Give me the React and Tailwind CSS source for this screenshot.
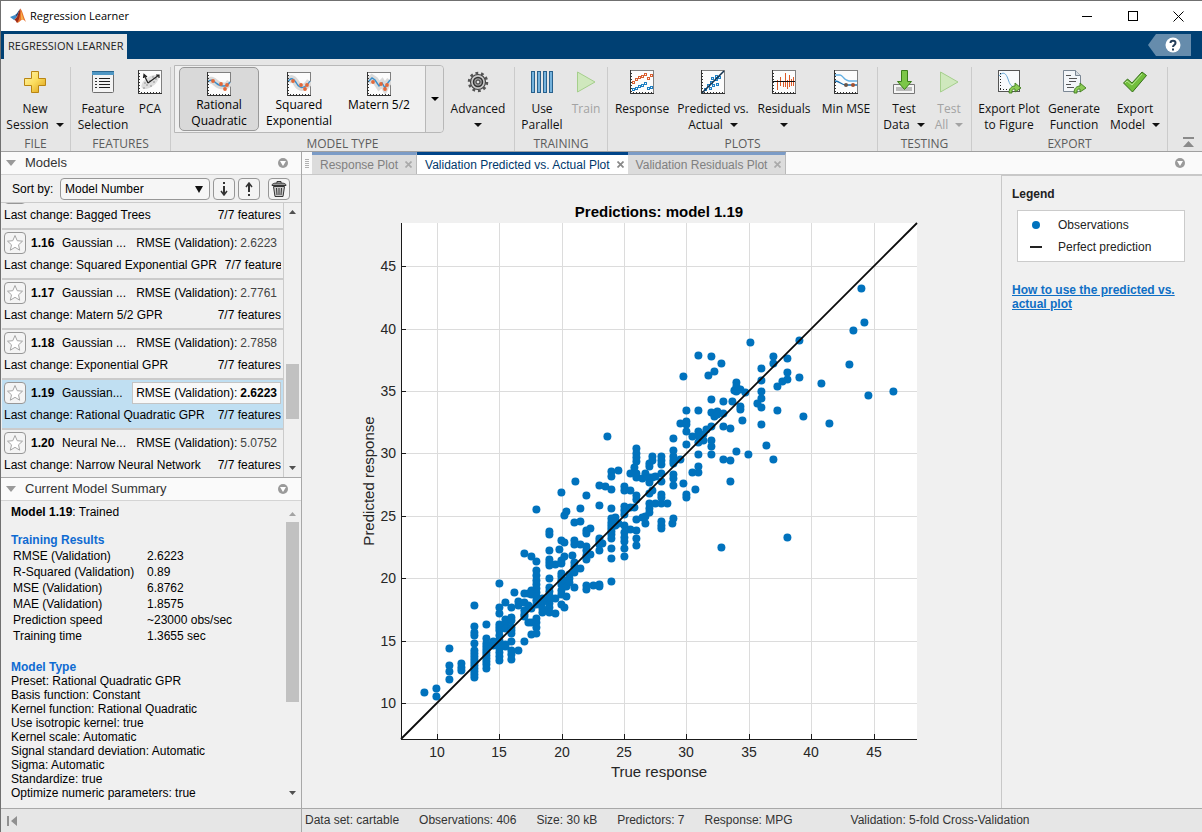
import React from "react";

// the first row is scrolled mostly out of view, only its second line is filled
const models = [
    { id: "1.15", change: "Bagged Trees", features: "7/7 features" },
    { id: "1.16", name: "Gaussian ...", rmse: "2.6223", change: "Squared Exponential GPR", features: "7/7 features" },
    { id: "1.17", name: "Gaussian ...", rmse: "2.7761", change: "Matern 5/2 GPR", features: "7/7 features" },
    { id: "1.18", name: "Gaussian ...", rmse: "2.7858", change: "Exponential GPR", features: "7/7 features" },
    { id: "1.19", name: "Gaussian...", rmse: "2.6223", change: "Rational Quadratic GPR", features: "7/7 features", selected: true },
    { id: "1.20", name: "Neural Ne...", rmse: "5.0752", change: "Narrow Neural Network", features: "7/7 features" },
];

const results = [
    ["RMSE (Validation)", "2.6223"],
    ["R-Squared (Validation)", "0.89"],
    ["MSE (Validation)", "6.8762"],
    ["MAE (Validation)", "1.8575"],
    ["Prediction speed", "~23000 obs/sec"],
    ["Training time", "1.3655 sec"],
];

const modelType = [
    "Preset: Rational Quadratic GPR",
    "Basis function: Constant",
    "Kernel function: Rational Quadratic",
    "Use isotropic kernel: true",
    "Kernel scale: Automatic",
    "Signal standard deviation: Automatic",
    "Sigma: Automatic",
    "Standardize: true",
    "Optimize numeric parameters: true",
];

// each row is one x followed by all the y values in that column
const columns = [
    [424, 692],
    [436, 688, 696],
    [449, 648, 665, 671, 679],
    [461, 663, 667, 670],
    [474, 605, 626, 632, 635, 643, 650, 653, 656, 659, 662, 665, 668, 671, 674, 677],
    [486, 624, 638, 643, 646, 649, 652, 655, 658, 661, 664, 668],
    [493, 641, 645],
    [499, 583, 607, 613, 624, 627, 630, 635, 640, 644, 648, 652, 656, 660],
    [505, 602, 619, 624, 628, 644, 646],
    [511, 607, 617, 620, 627, 630, 633, 641, 650, 654, 659],
    [514, 592],
    [518, 601, 605, 650],
    [524, 553, 593, 602, 610, 614, 616, 641],
    [528, 593, 605, 622],
    [531, 556, 590, 594, 608, 622, 634],
    [536, 509, 561, 570, 575, 580, 584, 588, 592, 596, 600, 604, 618, 622, 627, 633],
    [542, 598, 602, 608, 612],
    [549, 531, 534, 550, 559, 562, 565, 578, 587, 591, 595, 599, 603, 607, 612],
    [555, 564, 598, 613],
    [559, 549],
    [561, 492, 540, 560, 563, 573, 576, 580, 584, 590, 594, 604],
    [564, 515, 542, 556, 580, 607],
    [566, 511, 586, 596],
    [569, 574, 578, 582],
    [572, 555],
    [574, 522, 540, 544, 562, 566, 572, 587],
    [575, 481],
    [580, 508, 521, 544, 568],
    [586, 495, 530, 533, 546, 550, 555, 559, 585, 589],
    [590, 528, 554],
    [593, 585],
    [599, 505, 485, 538, 541, 544, 550, 584, 586],
    [602, 543],
    [605, 486],
    [607, 436],
    [611, 471, 476, 489, 508, 518, 522, 525, 528, 531, 534, 538, 548, 558, 581],
    [615, 517, 521, 525],
    [618, 470, 523],
    [624, 486, 490, 506, 510, 514, 525, 532, 537, 541, 548, 556],
    [630, 473, 490, 507, 529],
    [634, 467, 507],
    [636, 448, 453, 457, 461, 473, 477, 495, 499, 519, 530, 538, 545],
    [642, 478, 517],
    [645, 473, 516, 523],
    [649, 463, 466, 477, 482, 493, 503, 508, 512],
    [652, 456, 460, 477, 490],
    [655, 476, 503],
    [661, 456, 460, 464, 473, 481, 494, 497, 503, 521, 525, 528],
    [667, 503],
    [672, 523],
    [673, 438, 450, 456, 460, 463, 474, 478, 485, 518],
    [680, 423, 459],
    [683, 376, 483],
    [686, 410, 421, 424, 431, 444, 494, 497],
    [692, 436, 472],
    [695, 489],
    [698, 355, 410, 431, 435, 442, 454, 466, 472],
    [703, 434, 440],
    [706, 429],
    [708, 375],
    [711, 356, 399, 412, 426, 440, 446, 454],
    [714, 371, 416],
    [717, 411, 414],
    [721, 363, 547],
    [723, 401, 413, 426, 459],
    [730, 428, 460, 481],
    [732, 401],
    [734, 390],
    [736, 382, 386, 391, 451],
    [740, 389, 406, 409],
    [742, 420],
    [745, 392],
    [748, 454],
    [750, 342],
    [757, 403],
    [761, 368, 380, 391, 398, 407, 424],
    [766, 445],
    [773, 356, 363, 459],
    [777, 386, 410],
    [782, 381],
    [787, 358, 372, 379, 537],
    [799, 340, 377],
    [803, 416],
    [821, 383],
    [829, 423],
    [849, 364],
    [853, 330],
    [861, 288],
    [864, 322],
    [868, 395],
    [893, 391],
];

const ticks = [
    { label: 10, x: 437, y: 703 },
    { label: 15, x: 499, y: 641 },
    { label: 20, x: 562, y: 578 },
    { label: 25, x: 624, y: 516 },
    { label: 30, x: 686, y: 453 },
    { label: 35, x: 749, y: 391 },
    { label: 40, x: 811, y: 329 },
    { label: 45, x: 874, y: 266 },
];

function ScatterPlot() {
    return (
        <svg viewBox="302 175 699 633" className="h-full w-full" fontFamily="'Liberation Sans', Arial, sans-serif">
            <text x="659" y="217" textAnchor="middle" fontSize="15" fontWeight="bold" fill="#000">Predictions: model 1.19</text>
            <rect x="401" y="223" width="516" height="516" fill="#fff" />
            {ticks.map((t) => (
                <g key={t.label} stroke="#dcdcdc" shapeRendering="crispEdges">
                    <line x1={t.x} x2={t.x} y1="223" y2="739" />
                    <line x1="401" x2="917" y1={t.y} y2={t.y} />
                </g>
            ))}
            {columns.map(([x, ...ys]) =>
                ys.map((y) => <circle key={`${x}-${y}`} cx={x + 0.4} cy={y + 0.4} r="4" fill="#0072bd" />)
            )}
            <line x1="401" y1="739" x2="917" y2="223" stroke="#0a0a0a" strokeWidth="1.800" />
            <path d="M401 223V739H917" fill="none" stroke="#1a1a1a" shapeRendering="crispEdges" />
            {ticks.map((t) => (
                <g key={t.label} fill="#262626" fontSize="14">
                    <path d={`M${t.x} 739v-5M401 ${t.y}h5`} stroke="#1a1a1a" shapeRendering="crispEdges" />
                    <text x={t.x} y="757" textAnchor="middle">{t.label}</text>
                    <text x="396" y={t.y + 5} textAnchor="end">{t.label}</text>
                </g>
            ))}
            <text x="659" y="777" textAnchor="middle" fontSize="15" fill="#262626">True response</text>
            <text transform="translate(374 481) rotate(-90)" textAnchor="middle" fontSize="15" fill="#262626">Predicted response</text>
        </svg>
    );
}

/* ---------- icons ---------- */

function Svg({ size = 24, children }) {
    return (
        <svg width={size} height={size} viewBox="0 0 24 24" fill="none" className="shrink-0" aria-hidden="true">
            {children}
        </svg>
    );
}

function Logo() {
    return (
        <svg width="18" height="16" viewBox="0 0 18 16" className="shrink-0" aria-hidden="true">
            <path d="M1 9l5-2 2 2-3 3z" fill="#3c8ccb" />
            <path d="M6 7c2-1 3-4 5-6L8 9z" fill="#1f4f86" />
            <path d="M5 12l3-3c1-2 2-7 3.500-8.500C12 3 12 8 11 11c-1 2-2 3-3 4-1-1-1-3-3-3z" fill="#9c2a17" />
            <path d="M11.500.5C13.500 3 15 10 17 14c-2-2-3-3-4.500-2S10 14.500 8 15c2-3 3.500-8 3.500-14.500z" fill="#e8702a" />
            <path d="M12 3c1 3 2 7 3 9-1-1-2-1-3 0z" fill="#f6b04c" />
        </svg>
    );
}

const PlusIcon = () => (
    <Svg>
        <defs>
            <linearGradient id="gold" x1="0" y1="0" x2="1" y2="1">
                <stop offset="0" stopColor="#fff6b0" />
                <stop offset="0.5" stopColor="#fbdc5c" />
                <stop offset="1" stopColor="#d89a14" />
            </linearGradient>
        </defs>
        <path d="M8.500 1.500h7v7h7v7h-7v7h-7v-7h-7v-7h7z" fill="url(#gold)" stroke="#b98512" />
    </Svg>
);

const ListIcon = () => (
    <Svg>
        <rect x="1.500" y="1.500" width="21" height="21" rx="1" fill="#f4f4f4" stroke="#6e6e6e" />
        <path d="M1 1h22v4H1z" fill="#4f97c4" />
        <path d="M1 1h22v1H1z" fill="#2c6890" />
        <path d="M8 8.500h11M8 11.500h11M8 14.500h11M8 17.500h11" stroke="#222" />
        <path d="M4 8.500h2M4 11.500h2M4 14.500h2M4 17.500h2" stroke="#333" />
    </Svg>
);

function PlotFrame({ children }) {
    return (
        <Svg>
            <rect x="0.500" y="0.500" width="23" height="23" fill="#fcfcfc" stroke="#808080" />
            {children}
            <path d="M1.500 3v19M3 22.500h20" stroke="#333" strokeDasharray="1 2" />
            <path d="M.5 0v23.500H24" stroke="#333" />
        </Svg>
    );
}

const PcaIcon = () => (
    <PlotFrame>
        <ellipse cx="12" cy="12" rx="10" ry="5" transform="rotate(-35 12 12)" fill="#dedede" />
        <path d="M5 17h2v2H5zM8 14h2v2H8zM12 15h2v2h-2zM15 11h2v2h-2zM17 8h2v2h-2zM11 10h2v2h-2zM6 12h2v2H6zM14 6h2v2h-2z" fill="#b8b8b8" />
        <path d="M10 13L21 5M18 5h3v3M10 13L6 5M5.500 8L6 4.500 9 7" stroke="#222" strokeWidth="1.200" />
    </PlotFrame>
);

const fits = {
    rq: {
        line: "M1 10c2-3 5-2 8 1s5 3 8 3 4-1 6-4",
        dots: [[6, 9], [14, 12], [20, 13], [18, 17]],
    },
    se: {
        line: "M1 10c3-6 6-3 9 2s8 5 13-3",
        dots: [[6, 9], [14, 13], [20, 13], [18, 17]],
    },
    matern: {
        line: "M1 10l4-4 3 2 4 6 3-3 3 5 2-4 3-4",
        dots: [[6, 10], [14, 12], [20, 13], [18, 17]],
    },
};

const FitIcon = ({ kind }) => (
    <PlotFrame>
        <path d={fits[kind].line} stroke="#dadada" strokeWidth="7" />
        <path d={fits[kind].line} stroke="#3a8fcb" strokeWidth="1.400" />
        {fits[kind].dots.map(([x, y]) => <circle key={`${x}-${y}`} cx={x} cy={y} r="1.900" fill="#e2693a" />)}
    </PlotFrame>
);

const GearIcon = () => (
    <Svg>
        <circle cx="12" cy="12" r="9" stroke="#555" strokeWidth="2.500" strokeDasharray="2.800 2.855" />
        <circle cx="12" cy="12" r="7.500" fill="#c9c9c9" stroke="#444" strokeWidth="1.200" />
        <circle cx="12" cy="12" r="4.500" fill="#999" stroke="#333" strokeWidth="1.500" />
        <circle cx="12" cy="12" r="2" fill="#e6e6e6" stroke="#333" />
    </Svg>
);

const ParallelIcon = () => (
    <Svg>
        {[1, 7, 13, 19].map((x) => (
            <rect key={x} x={x + 0.5} y="1.500" width="3" height="21" fill="#75b2dc" stroke="#28618d" />
        ))}
    </Svg>
);

const PlayIcon = () => (
    <Svg>
        <path d="M3.500 2L21 12 3.500 22z" fill="#cfe8bd" stroke="#a5cf8c" strokeLinejoin="round" />
    </Svg>
);

const ResponseIcon = () => (
    <PlotFrame>
        {[[3, 12], [6, 9], [9, 7], [12, 6], [15, 4], [18, 8], [21, 5]].map(([x, y]) => (
            <rect key={x} x={x - 0.5} y={y - 0.5} width="2" height="2" stroke="#d95f30" />
        ))}
        {[[3, 19], [6, 18], [9, 16], [12, 15], [15, 13], [18, 18], [21, 17]].map(([x, y]) => (
            <rect key={x} x={x - 0.5} y={y - 0.5} width="2" height="2" stroke="#1d7fc4" />
        ))}
    </PlotFrame>
);

const PredictedIcon = () => (
    <PlotFrame>
        {[[4, 19], [7, 15], [9, 18], [10, 12], [12, 15], [11, 8], [15, 9], [16, 14], [15, 6], [18, 7]].map(([x, y]) => (
            <rect key={`${x}-${y}`} x={x - 0.5} y={y - 0.5} width="2" height="2" fill="#d8ecfa" stroke="#1d7fc4" />
        ))}
        <path d="M1 23L23 1" stroke="#153450" strokeWidth="1.600" />
    </PlotFrame>
);

const ResidualsIcon = () => (
    <PlotFrame>
        <path d="M5.500 10v10M8.500 7v9M11.500 11v6M13.500 3v14M15.500 10v9M17.500 5v12M19.500 9v7M21.500 7v9" stroke="#dd5a27" />
        <path d="M1 11.500h22" stroke="#111" />
    </PlotFrame>
);

const MinMseIcon = () => (
    <PlotFrame>
        <path d="M1 5h5c3 0 4 6 9 6h8" stroke="#63b0e3" strokeWidth="1.400" />
        <path d="M1 11c5 0 6 4 11 4h11" stroke="#1b6fae" strokeWidth="1.400" />
        <circle cx="12" cy="15" r="2" fill="#6b5548" />
        <circle cx="19" cy="15" r="2" fill="#a4502f" />
    </PlotFrame>
);

const TestDataIcon = () => (
    <Svg>
        <path d="M1.500 14.500h21v9h-21z" fill="#f5f5f5" stroke="#777" />
        <path d="M4 17h16v4H4z" fill="#bbb" />
        <path d="M9.500.5h6v11h4l-7 8-7-8h4z" fill="#7cc648" stroke="#3b7d1a" />
    </Svg>
);

const GreenArrow = () => (
    <path d="M12 23c0-5 3-7 6-7v-3l6 5-6 4v-3c-3 0-3 1-3 4z" fill="#8ccb55" stroke="#3f7d1d" strokeWidth="0.900" />
);

const ExportPlotIcon = () => (
    <Svg>
        <rect x="1.500" y="0.500" width="21" height="21" fill="#f8fafc" stroke="#555" />
        <path d="M3.500 3v17M3 19.500h10" stroke="#222" strokeDasharray="1 2" />
        <path d="M2 6c4-5 7-3 9 3s3 7 6 8" stroke="#6ba9d6" />
        <GreenArrow />
    </Svg>
);

const GenerateIcon = () => (
    <Svg>
        <path d="M1.500.5h12l5 5v16h-17z" fill="#f3f6f9" stroke="#7b8794" />
        <path d="M13.500.5v5h5" fill="#d5dbe0" stroke="#7b8794" />
        <path d="M4 5.500h5M7 8.500h8M7 11.500h7M4 14.500h5M5 17.500h7" stroke="#555" />
        <GreenArrow />
    </Svg>
);

const CheckIcon = () => (
    <Svg>
        <path d="M.5 13l4-4 4.500 4L19 2l4.500 3.500L9.500 22z" fill="#72bf3c" stroke="#356f19" strokeLinejoin="round" />
        <path d="M2 13l2-2 5 4L19 4" stroke="#b7e394" />
    </Svg>
);

function Caret({ className = "" }) {
    return (
        <svg width="8" height="4" viewBox="0 0 8 4" className={`inline-block ${className}`} aria-hidden="true">
            <path d="M0 0h8L4 4z" fill="currentColor" />
        </svg>
    );
}

function PanelMenuIcon() {
    return (
        <svg width="10" height="10" viewBox="0 0 10 10" aria-hidden="true">
            <circle cx="5" cy="5" r="5" fill="#9a9a9a" />
            <path d="M2 3h6L5 8z" fill="#fff" />
        </svg>
    );
}

/* ---------- toolstrip ---------- */

function ToolButton({ icon, lines, caret, disabled, className }) {
    return (
        <button type="button" disabled={disabled} className={`flex flex-col items-center whitespace-nowrap ${disabled ? "text-[#a3a3a3]" : "text-[#111]"} ${className}`}>
            {icon}
            <span className="mt-[7px] block">{lines[0]}</span>
            <span className="flex h-4 items-center gap-[7px]">
                {lines[1]}
                {caret && <Caret />}
            </span>
        </button>
    );
}

function Section({ title, className = "", children }) {
    return (
        <section className={`flex flex-col border-r border-[#cbcbcb] ${className}`}>
            <div className="flex flex-1 justify-end pt-[3px] pr-px">{children}</div>
            <h2 className="h-[14px] text-center leading-[14px] text-[#5c5c5c]">{title}</h2>
        </section>
    );
}

function GalleryItem({ icon, lines, active }) {
    return (
        <button type="button" aria-pressed={!!active} className={`flex h-16 w-20 flex-col items-center rounded-[5px] border pt-1 ${active ? "border-[#999] bg-[#d9d9d9]" : "border-transparent"}`}>
            {icon}
            <span className="mt-px block">
                {lines.map((l) => <span key={l} className="block leading-4">{l}</span>)}
            </span>
        </button>
    );
}

function Toolstrip() {
    return (
        <div className="flex h-[93px] shrink-0 border-b border-[#a0a0a0] bg-[#e6e6e6] pt-2 font-['Open_Sans',sans-serif] text-[12px] leading-4">
            <Section title="FILE" className="w-[70px]">
                <ToolButton icon={<PlusIcon />} lines={["New", "Session"]} caret className="w-[68px]" />
            </Section>
            <Section title="FEATURES" className="w-[100px]">
                <ToolButton icon={<ListIcon />} lines={["Feature", "Selection"]} className="w-[56px]" />
                <ToolButton icon={<PcaIcon />} lines={["PCA"]} className="w-[38px]" />
            </Section>
            <section className="flex w-[344px] flex-col border-r border-[#cbcbcb]">
                <div className="flex flex-1 pl-[3px]">
                    <div className="-mt-[2px] flex h-[68px] rounded-r-[4px] border border-[#b8b8b8] bg-[#f0f0f0]">
                        <div className="flex w-[250px] p-[1px] pl-1">
                            <GalleryItem icon={<FitIcon kind="rq" />} lines={["Rational", "Quadratic"]} active />
                            <GalleryItem icon={<FitIcon kind="se" />} lines={["Squared", "Exponential"]} />
                            <GalleryItem icon={<FitIcon kind="matern" />} lines={["Matern 5/2"]} />
                        </div>
                        <button type="button" aria-label="More models" className="flex w-[18px] items-center justify-center rounded-r-[4px] border-l border-[#b8b8b8] bg-[#e6e6e6]">
                            <Caret />
                        </button>
                    </div>
                    <div className="pt-[3px]">
                        <ToolButton icon={<GearIcon />} lines={["Advanced"]} caret className="w-[68px]" />
                    </div>
                </div>
                <h2 className="h-[14px] text-center leading-[14px] text-[#5c5c5c]">MODEL TYPE</h2>
            </section>
            <Section title="TRAINING" className="w-[93px]">
                <ToolButton icon={<ParallelIcon />} lines={["Use", "Parallel"]} className="w-[48px]" />
                <ToolButton icon={<PlayIcon />} lines={["Train"]} disabled className="w-[40px]" />
            </Section>
            <Section title="PLOTS" className="w-[270px]">
                <ToolButton icon={<ResponseIcon />} lines={["Response"]} className="w-[64px]" />
                <ToolButton icon={<PredictedIcon />} lines={["Predicted vs.", "Actual"]} caret className="w-[78px]" />
                <ToolButton icon={<ResidualsIcon />} lines={["Residuals"]} caret className="w-[64px]" />
                <ToolButton icon={<MinMseIcon />} lines={["Min MSE"]} className="w-[60px]" />
            </Section>
            <Section title="TESTING" className="w-[94px]">
                <ToolButton icon={<TestDataIcon />} lines={["Test", "Data"]} caret className="w-[48px]" />
                <ToolButton icon={<PlayIcon />} lines={["Test", "All"]} caret disabled className="w-[42px]" />
            </Section>
            <Section title="EXPORT" className="w-[196px]">
                <ToolButton icon={<ExportPlotIcon />} lines={["Export Plot", "to Figure"]} className="w-[70px]" />
                <ToolButton icon={<GenerateIcon />} lines={["Generate", "Function"]} className="w-[60px]" />
                <ToolButton icon={<CheckIcon />} lines={["Export", "Model"]} caret className="w-[62px]" />
            </Section>
            <div className="flex flex-1 items-end justify-end pr-2 pb-[3px]">
                <button type="button" aria-label="Collapse toolstrip">
                    <svg width="11" height="11" viewBox="0 0 11 11" aria-hidden="true">
                        <path d="M0 0h11v2H0zM5.500 4L11 10H0z" fill="#8a8a8a" />
                    </svg>
                </button>
            </div>
        </div>
    );
}

/* ---------- left side ---------- */

function PanelHeader({ title }) {
    return (
        <div className="flex h-[23px] shrink-0 items-center border-b border-[#d4d4d4] bg-[#fafafa] pr-[13px] pl-[5px]">
            <svg width="10" height="6" viewBox="0 0 10 6" aria-hidden="true"><path d="M0 0h10L5 6z" fill="#9a9a9a" /></svg>
            <h2 className="flex-1 pl-[9px] text-[13px] text-[#333]">{title}</h2>
            <button type="button" aria-label={`${title} menu`}><PanelMenuIcon /></button>
        </div>
    );
}

function SmallButton({ label, children }) {
    return (
        <button type="button" aria-label={label} className="flex h-[22px] w-[22px] shrink-0 items-center justify-center rounded-[4px] border border-[#979797] bg-[#f4f4f4]">
            {children}
        </button>
    );
}

function ModelRow({ m }) {
    return (
        <li className={`h-[50px] overflow-hidden border-t-2 border-[#cbcbcb] pt-px pl-[2px] whitespace-nowrap ${m.selected ? "bg-[#c0dff2]" : ""}`}>
            <div className="flex h-6 items-center">
                <SmallButton label={`Favorite ${m.id}`}>
                    <svg width="18" height="18" viewBox="0 0 18 18" aria-hidden="true">
                        <path d="M9 1.500l2.200 5.200 5.300.5-4 3.600 1.200 5.400L9 13.300l-4.700 2.900 1.200-5.400-4-3.600 5.300-.5z" fill="#fff" stroke="#a5a5a5" />
                    </svg>
                </SmallButton>
                {m.rmse && (
                    <>
                        <b className="w-[30px] pl-[5px]">{m.id}</b>
                        <span className="flex-1 pl-[6px]">{m.name}</span>
                        <span className={`mr-[2px] flex h-[22px] items-center gap-[3px] border px-[3px] ${m.selected ? "border-[#c4c4c4] bg-[#f8f8f8]" : "border-transparent"}`}>
                            RMSE (Validation):
                            {m.selected ? <b>{m.rmse}</b> : <span className="text-[#444]">{m.rmse}</span>}
                        </span>
                    </>
                )}
            </div>
            <div className="mr-[2px] flex h-5 items-center justify-between gap-2 overflow-hidden">
                <span className="shrink-0">Last change: {m.change}</span>
                <span className="shrink-0">{m.features}</span>
            </div>
        </li>
    );
}

function ScrollArrow({ up, muted }) {
    return (
        <svg width="7" height="4" viewBox="0 0 7 4" aria-hidden="true">
            <path d={up ? "M0 4h7L3.500 0z" : "M0 0h7L3.500 4z"} fill={muted ? "#a3a3a3" : "#505050"} />
        </svg>
    );
}

function ModelsPanel() {
    return (
        <section className="flex h-[326px] shrink-0 flex-col border-b border-[#a8a8a8]">
            <PanelHeader title="Models" />
            <div className="flex h-7 shrink-0 items-center gap-[3px] border-b border-[#cbcbcb] pr-[11px] pl-[11px]">
                <label htmlFor="sort" className="w-[45px]">Sort by:</label>
                <div className="relative w-[150px]">
                    <select id="sort" className="h-[22px] w-full appearance-none rounded-[4px] border border-[#979797] bg-[#f6f6f6] pl-1">
                        <option>Model Number</option>
                        <option>RMSE (Validation)</option>
                    </select>
                    <svg width="8" height="7" viewBox="0 0 8 7" className="pointer-events-none absolute top-2 right-[7px]" aria-hidden="true">
                        <path d="M0 0h8L4 7z" fill="#111" />
                    </svg>
                </div>
                <SmallButton label="Sort ascending">
                    <svg width="10" height="14" viewBox="0 0 10 14" fill="none" stroke="#333" aria-hidden="true">
                        <path d="M5 0v2M5 4v9" strokeWidth="2" /><path d="M2 9l3 4 3-4" strokeWidth="1.500" />
                    </svg>
                </SmallButton>
                <SmallButton label="Sort descending">
                    <svg width="10" height="14" viewBox="0 0 10 14" fill="none" stroke="#333" aria-hidden="true">
                        <path d="M5 14v-2M5 10V1" strokeWidth="2" /><path d="M2 5l3-4 3 4" strokeWidth="1.500" />
                    </svg>
                </SmallButton>
                <div className="flex-1" />
                <SmallButton label="Delete model">
                    <svg width="16" height="16" viewBox="0 0 16 16" fill="none" stroke="#333" aria-hidden="true">
                        <path d="M6 2V.5h4V2" />
                        <path d="M2.500 5.500h11L12 15.500H4z" fill="#c9c9c9" />
                        <path d="M1 4.500c0-2 2-2.500 7-2.500s7 .5 7 2.500z" fill="#999" />
                        <path d="M5.500 7l.5 7M8 7v7M10.500 7l-.5 7" />
                    </svg>
                </SmallButton>
            </div>
            <div className="flex min-h-0 flex-1">
                <div className="ml-px flex-1 overflow-hidden border-r border-[#cbcbcb]">
                    <ul className="-mt-[25px]">
                        {models.map((m) => <ModelRow key={m.id} m={m} />)}
                    </ul>
                </div>
                <div className="flex w-[17px] flex-col items-center pt-[7px] pb-[7px]">
                    <ScrollArrow up />
                    <div className="mt-[150px] h-[55px] w-[13px] bg-[#c1c1c1]" />
                    <div className="flex-1" />
                    <ScrollArrow />
                </div>
            </div>
        </section>
    );
}

function SummaryPanel() {
    return (
        <section className="flex min-h-0 flex-1 flex-col">
            <PanelHeader title="Current Model Summary" />
            <div className="flex min-h-0 flex-1">
                <div className="flex-1 overflow-hidden pt-1 pl-[10px] leading-[14px]">
                    <p><b>Model 1.19</b>: Trained</p>
                    <h3 className="mt-[14px] font-bold text-[#0f6bd2]">Training Results</h3>
                    <table className="mt-px mb-4 leading-4">
                        <tbody>
                            {results.map(([k, v]) => (
                                <tr key={k}>
                                    <td className="w-[136px] p-0 pl-[2px]">{k}</td>
                                    <td className="p-0">{v}</td>
                                </tr>
                            ))}
                        </tbody>
                    </table>
                    <h3 className="font-bold text-[#0f6bd2]">Model Type</h3>
                    {modelType.map((line) => <p key={line}>{line}</p>)}
                </div>
                <div className="flex w-[17px] flex-col items-center pt-[11px] pb-[13px]">
                    <ScrollArrow up muted />
                    <div className="mt-[6px] h-[180px] w-[13px] bg-[#c1c1c1]" />
                    <div className="flex-1" />
                    <ScrollArrow />
                </div>
            </div>
        </section>
    );
}

/* ---------- document area ---------- */

function DocTab({ title, active }) {
    return (
        <div className={`flex h-full items-center border-t-[3px] pl-2 ${active ? "border-[#004589] bg-white text-[#00386b]" : "border-[#7b9bc6] border-r border-r-[#bababa] bg-[#dcdcdc] text-[#808080]"}`}>
            <button type="button" role="tab" aria-selected={!!active}>{title}</button>
            <button type="button" aria-label={`Close ${title}`} className="pr-1 pl-[7px]">
                <svg width="7" height="7" viewBox="0 0 7 7" aria-hidden="true"><path d="M.5.5l6 6M6.500.5l-6 6" stroke={active ? "#888" : "#aaa"} strokeWidth="1.700" /></svg>
            </button>
        </div>
    );
}

function Legend() {
    return (
        <aside className="w-[201px] shrink-0 border-t border-l border-[#c8c8c8] pt-[10px] pl-[10px]">
            <h3 className="font-bold text-[#222]">Legend</h3>
            <ul className="mt-2 mr-[17px] ml-[5px] h-[52px] border border-[#cbcbcb] bg-white pt-[3px] text-[#222]">
                <li className="flex h-[22px] items-center gap-1">
                    <span className="flex w-9 justify-center"><i className="h-2 w-2 rounded-full bg-[#0072bd]" /></span>
                    Observations
                </li>
                <li className="flex h-[22px] items-center gap-1">
                    <span className="flex w-9 justify-center"><i className="h-[2px] w-3 bg-[#222]" /></span>
                    Perfect prediction
                </li>
            </ul>
            <a href="#help" className="mt-[21px] block w-[175px] leading-[14px] font-bold text-[#0f6fc5] underline">
                How to use the predicted vs. actual plot
            </a>
        </aside>
    );
}

export default function App() {
    return (
        <div className="flex h-screen flex-col overflow-hidden border-t border-l border-[#707070] bg-[#f0f0f0] font-['Liberation_Sans',Arial,sans-serif] text-[12px] leading-4 text-black">
            <header className="flex h-[30px] shrink-0 items-center bg-white pr-px pl-2 font-['Open_Sans',sans-serif]">
                <Logo />
                <h1 className="flex-1 pl-[3px] text-[11px]">Regression Learner</h1>
                <div className="flex">
                    <button type="button" aria-label="Minimize" className="flex w-[46px] items-center justify-center"><i className="h-px w-[10px] bg-black" /></button>
                    <button type="button" aria-label="Maximize" className="flex w-[45px] items-center justify-center"><i className="h-[10px] w-[10px] border border-black" /></button>
                    <button type="button" aria-label="Close" className="flex w-[46px] items-center justify-center">
                        <svg width="11" height="11" viewBox="0 0 11 11" aria-hidden="true"><path d="M.5.5l10 10M10.500.5l-10 10" stroke="#000" /></svg>
                    </button>
                </div>
            </header>

            <div className="flex h-7 shrink-0 justify-between bg-[#004073] pt-[3px] pl-[3px] font-['Open_Sans',sans-serif]">
                <button type="button" className="bg-[#e6e6e6] px-1 pb-[2px] text-[11px] whitespace-nowrap text-[#222]">REGRESSION LEARNER</button>
                <button type="button" aria-label="Help" className="mr-[11px] h-[22px]">
                    <svg width="43" height="22" viewBox="0 0 43 22" aria-hidden="true">
                        <path d="M8 0h35v22H8L0 11z" fill="#668cac" />
                        <circle cx="25" cy="11" r="7.500" fill="#fff" />
                        <path d="M22.500 9c0-3 5-3 5 0 0 2-2.500 2-2.500 4M25 14.500v2" stroke="#243e5a" strokeWidth="2" fill="none" />
                    </svg>
                </button>
            </div>

            <Toolstrip />

            <main className="flex min-h-0 flex-1">
                <div className="flex w-[301px] shrink-0 flex-col border-r border-[#a8a8a8]">
                    <ModelsPanel />
                    <SummaryPanel />
                </div>
                <div className="flex min-w-0 flex-1 flex-col">
                    <div role="tablist" className="flex h-[23px] shrink-0 items-center border-b border-[#c8c8c8] bg-[#fafafa]">
                        <div className="flex w-[10px] flex-col items-center gap-[1px]">
                            {[0, 1, 2, 3, 4].map((i) => <i key={i} className="h-px w-1 bg-[#b0b0b0]" />)}
                        </div>
                        <DocTab title="Response Plot" />
                        <DocTab title="Validation Predicted vs. Actual Plot" active />
                        <DocTab title="Validation Residuals Plot" />
                        <div className="flex-1" />
                        <button type="button" aria-label="Document menu" className="mr-[17px]"><PanelMenuIcon /></button>
                    </div>
                    <div className="flex min-h-0 flex-1">
                        <div className="min-w-0 flex-1"><ScatterPlot /></div>
                        <Legend />
                    </div>
                </div>
            </main>

            <footer className="flex h-6 shrink-0 items-center border-t border-[#a8a8a8] bg-[#e6e6e6] whitespace-nowrap text-[#333]">
                <div className="flex h-full w-[301px] shrink-0 items-center border-r border-[#a8a8a8] pl-[6px]">
                    <button type="button" aria-label="Collapse side panel">
                        <svg width="11" height="10" viewBox="0 0 11 10" aria-hidden="true"><path d="M0 0h2v10H0zM10 0v10L4 5z" fill="#909090" /></svg>
                    </button>
                </div>
                <div className="flex gap-5 pb-[2px] pl-[3px]">
                    <span>Data set: cartable</span>
                    <span>Observations: 406</span>
                    <span>Size: 30 kB</span>
                    <span>Predictors: 7</span>
                    <span>Response: MPG</span>
                    <span className="pl-[38px]">Validation: 5-fold Cross-Validation</span>
                </div>
            </footer>
        </div>
    );
}
